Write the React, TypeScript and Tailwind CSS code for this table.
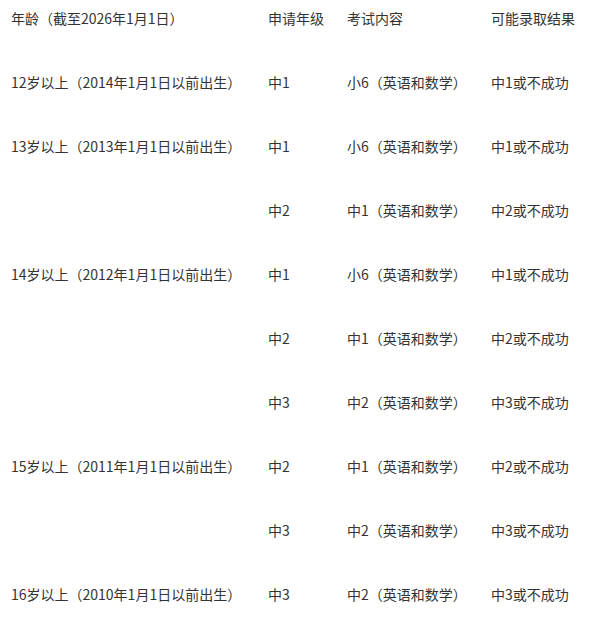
const rows: [string, string, string, string][] = [
  ['12岁以上（2014年1月1日以前出生）', '中1', '小6（英语和数学）', '中1或不成功'],
  ['13岁以上（2013年1月1日以前出生）', '中1', '小6（英语和数学）', '中1或不成功'],
  ['', '中2', '中1（英语和数学）', '中2或不成功'],
  ['14岁以上（2012年1月1日以前出生）', '中1', '小6（英语和数学）', '中1或不成功'],
  ['', '中2', '中1（英语和数学）', '中2或不成功'],
  ['', '中3', '中2（英语和数学）', '中3或不成功'],
  ['15岁以上（2011年1月1日以前出生）', '中2', '中1（英语和数学）', '中2或不成功'],
  ['', '中3', '中2（英语和数学）', '中3或不成功'],
  ['16岁以上（2010年1月1日以前出生）', '中3', '中2（英语和数学）', '中3或不成功'],
];

const cols = 'grid grid-cols-[257px_79px_144px_1fr] pl-[11px]';

export default function App() {
  return (
    <div className="w-[601px] h-[618px] overflow-hidden bg-white text-[14px] leading-[20px] text-[#333333] font-['Noto_Sans_CJK_SC','Noto_Sans',sans-serif]">
      {/* Header */}
      <div className={`${cols} h-[50px] pt-[8px]`}>
        <div>年龄（截至2026年1月1日）</div>
        <div>申请年级</div>
        <div>考试内容</div>
        <div>可能录取结果</div>
      </div>

      {/* Body rows */}
      {rows.map((r, i) => (
        <div key={i} className={`${cols} h-[64px] items-center`}>
          <div>{r[0]}</div>
          <div>{r[1]}</div>
          <div>{r[2]}</div>
          <div>{r[3]}</div>
        </div>
      ))}
    </div>
  );
}
